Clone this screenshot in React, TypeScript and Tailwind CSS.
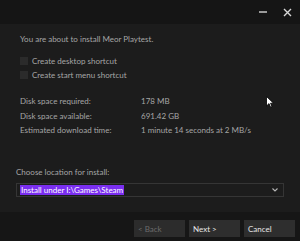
import React from "react";

const rows = [
  { label: "Disk space required:", value: "178 MB" },
  { label: "Disk space available:", value: "691.42 GB" },
  { label: "Estimated download time:", value: "1 minute 14 seconds at 2 MB/s" },
];

export default function App() {
  return (
    <div className="relative w-[300px] h-[241px] bg-[#1c1c1c] flex flex-col text-[8px] text-[#a6a6a6] font-['Lato',sans-serif] overflow-hidden">
      {/* title bar */}
      <div className="h-[24px] bg-[#151515] flex items-center justify-end gap-[16px] pr-[8px]">
        <div className="w-[8px] h-[1.5px] bg-[#9a9a9a]" />
        <svg width="9" height="9" viewBox="0 0 9 9">
          <path d="M1 1L8 8M8 1L1 8" stroke="#d8d8d8" strokeWidth="1.4" />
        </svg>
      </div>

      {/* body */}
      <div className="flex-1 flex flex-col pt-[9px]">
        <div className="px-[20px]">
          <div className="h-[12px] leading-[12px]">You are about to install Meor Playtest.</div>
          <div className="mt-[10px] flex flex-col gap-[2px]">
            {["Create desktop shortcut", "Create start menu shortcut"].map((t) => (
              <div key={t} className="h-[12px] flex items-center gap-[4px]">
                <div className="w-[8px] h-[8px] bg-[#2b2b2b]" />
                <span>{t}</span>
              </div>
            ))}
          </div>
          <div className="mt-[13px] flex flex-col">
            {rows.map((r) => (
              <div key={r.label} className="h-[14.5px] flex items-center">
                <span className="w-[121px]">{r.label}</span>
                <span>{r.value}</span>
              </div>
            ))}
          </div>
        </div>

        <div className="px-[16px] mt-[28px]">
          <div className="h-[12px] leading-[12px]">Choose location for install:</div>
          <div className="mt-[5px] h-[14px] border border-[#353535] flex items-center pl-[3px] pr-[5px]">
            <span className="bg-[#7a2ef0] text-white px-[1px] leading-[10px] h-[10px]">
              Install under I:\Games\Steam
            </span>
            <svg className="ml-auto" width="6" height="4" viewBox="0 0 6 4">
              <path d="M0.5 0.5L3 3L5.5 0.5" stroke="#b5b5b5" strokeWidth="1.1" fill="none" />
            </svg>
          </div>
        </div>
      </div>

      {/* footer */}
      <div className="h-[29px] bg-[#161616] flex justify-end gap-[4px] pr-[5px] pt-[8px]">
        <button className="w-[51px] h-[17px] bg-[#2c2c2c] text-[#6b6b6b] text-left pl-[4px]">&lt; Back</button>
        <button className="w-[51px] h-[17px] bg-[#2e2e2e] text-[#e6e6e6] text-left pl-[4px]">Next &gt;</button>
        <button className="w-[51px] h-[17px] bg-[#2e2e2e] text-[#e6e6e6] text-left pl-[4px]">Cancel</button>
      </div>

      {/* mouse cursor */}
      <svg className="absolute left-[266px] top-[96px]" width="8" height="12" viewBox="0 0 8 12">
        <path d="M0.5 0.5V10L3 7.6L4.6 11.2L6 10.6L4.5 7.2H7.5Z" fill="#fff" stroke="#000" strokeWidth="0.8" />
      </svg>
    </div>
  );
}
